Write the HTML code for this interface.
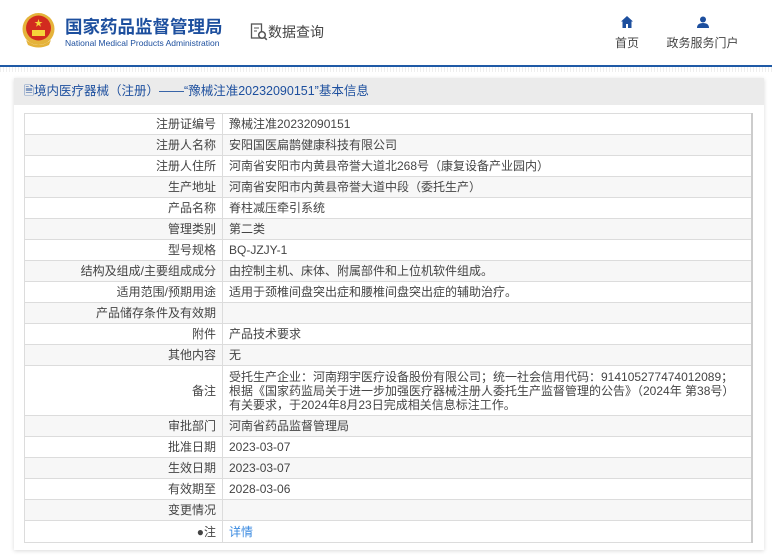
<!DOCTYPE html>
<html><head><meta charset="utf-8"><style>
*{margin:0;padding:0;box-sizing:border-box}
body{width:772px;height:559px;background:#fff;font-family:"Liberation Sans","Noto Sans CJK SC",sans-serif;font-size:12px;color:#444;position:relative;overflow:hidden}
.hdr{height:67px;border-bottom:2px solid #1f5aa6;position:relative}
.logo{position:absolute;left:22px;top:12px;width:33px;height:36px}
.t1{position:absolute;left:65px;top:14px;font-size:17.5px;font-weight:bold;color:#1d4f9e;white-space:nowrap}
.t2{position:absolute;left:65px;top:38px;font-size:8.5px;color:#1d4f9e;white-space:nowrap}
.q{position:absolute;left:250px;top:22px;font-size:14px;color:#444}
.nav{position:absolute;top:16px;text-align:center;font-size:12px;color:#444}
.stripe{height:5px;background:repeating-linear-gradient(90deg,#eee 0 1px,#fff 1px 3px)}
.panel{position:absolute;left:14px;top:78px;width:750px;height:472px;background:#fff;box-shadow:0 1px 4px rgba(0,0,0,.15)}
.ptitle{height:27px;background:#ebebeb;color:#1d4f9e;font-size:12.5px;line-height:27px;padding-left:10px}
table{position:absolute;left:10px;top:35px;width:729px;border-collapse:collapse;border:1px solid #ddd;border-right:2px solid #ccc}
td{border:1px solid #dcdcdc;height:21px;padding:0 6px;line-height:14px}
td.l{width:198px;text-align:right}
tr:nth-child(even) td{background:#f7f7f7}
a{color:#3a8ae0;text-decoration:none}
</style></head><body>
<div class="hdr">
<svg class="logo" viewBox="0 0 33 36"><circle cx="16.5" cy="17" r="16" fill="#e5b33a"/><circle cx="16.5" cy="16" r="12.5" fill="#d22b1f"/><polygon points="16.5,7 17.5,10 20.5,10 18,11.8 19,14.8 16.5,13 14,14.8 15,11.8 12.5,10 15.5,10" fill="#f5d33a"/><rect x="10" y="18" width="13" height="6" fill="#f5d33a"/><path d="M4 28 Q16.5 38 29 28 L27 33 Q16.5 38 6 33Z" fill="#e5b33a"/></svg>
<div class="t1">国家药品监督管理局</div>
<div class="t2">National Medical Products Administration</div>
<div class="q"><svg width="18" height="18" viewBox="0 0 18 18" style="vertical-align:-4px"><rect x="1.5" y="1" width="10" height="14" fill="none" stroke="#555" stroke-width="1.3"/><path d="M4 5h5M4 8h3" stroke="#555"/><circle cx="12" cy="12" r="3.3" fill="#fff" stroke="#555" stroke-width="1.5"/><path d="M14.3 14.3l2.5 2.5" stroke="#555" stroke-width="1.6"/></svg>数据查询</div>
<div class="nav" style="left:613px;width:28px"><svg width="12" height="12" viewBox="0 0 12 12"><path d="M6 0L0 5.5h1.5V12h3.5V8h2v4h3.5V5.5H12z" fill="#1d4f9e"/></svg><div style="margin-top:3px">首页</div></div>
<div class="nav" style="left:665px;width:75px"><svg width="12" height="12" viewBox="0 0 12 12"><circle cx="6" cy="3.5" r="3" fill="#1d4f9e"/><path d="M0 12Q0 7 6 7Q12 7 12 12z" fill="#1d4f9e"/></svg><div style="margin-top:3px">政务服务门户</div></div>
</div>
<div class="stripe"></div>
<div class="panel">
<div class="ptitle">🗎境内医疗器械（注册）——“豫械注准20232090151”基本信息</div>
<table>
<tr><td class="l">注册证编号</td><td>豫械注准20232090151</td></tr>
<tr><td class="l">注册人名称</td><td>安阳国医扁鹊健康科技有限公司</td></tr>
<tr><td class="l">注册人住所</td><td>河南省安阳市内黄县帝誉大道北268号（康复设备产业园内）</td></tr>
<tr><td class="l">生产地址</td><td>河南省安阳市内黄县帝誉大道中段（委托生产）</td></tr>
<tr><td class="l">产品名称</td><td>脊柱减压牵引系统</td></tr>
<tr><td class="l">管理类别</td><td>第二类</td></tr>
<tr><td class="l">型号规格</td><td>BQ-JZJY-1</td></tr>
<tr><td class="l">结构及组成/主要组成成分</td><td>由控制主机、床体、附属部件和上位机软件组成。</td></tr>
<tr><td class="l">适用范围/预期用途</td><td>适用于颈椎间盘突出症和腰椎间盘突出症的辅助治疗。</td></tr>
<tr><td class="l">产品储存条件及有效期</td><td></td></tr>
<tr><td class="l">附件</td><td>产品技术要求</td></tr>
<tr><td class="l">其他内容</td><td>无</td></tr>
<tr><td class="l" style="height:50px">备注</td><td style="line-height:14px">受托生产企业：河南翔宇医疗设备股份有限公司；统一社会信用代码：914105277474012089；根据《国家药监局关于进一步加强医疗器械注册人委托生产监督管理的公告》（2024年 第38号）有关要求，于2024年8月23日完成相关信息标注工作。</td></tr>
<tr><td class="l">审批部门</td><td>河南省药品监督管理局</td></tr>
<tr><td class="l">批准日期</td><td>2023-03-07</td></tr>
<tr><td class="l">生效日期</td><td>2023-03-07</td></tr>
<tr><td class="l">有效期至</td><td>2028-03-06</td></tr>
<tr><td class="l">变更情况</td><td></td></tr>
<tr><td class="l" style="height:22px">●注</td><td><a>详情</a></td></tr>
</table>
</div>
</body></html>
